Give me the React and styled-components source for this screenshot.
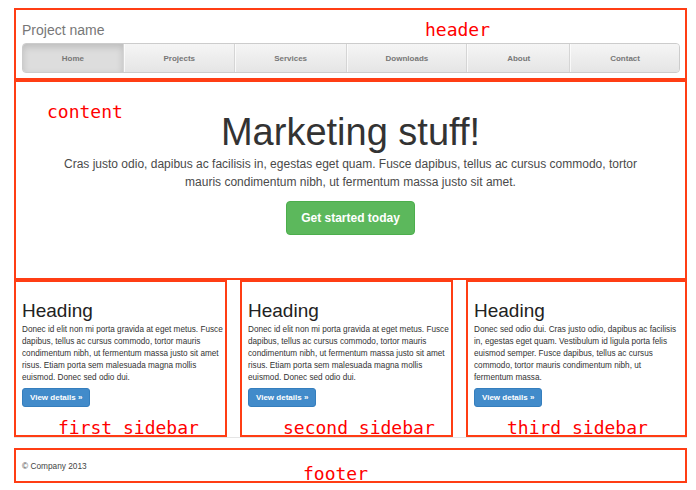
import React from 'react';
import styled, { createGlobalStyle } from 'styled-components';

const GlobalStyle = createGlobalStyle`
  html, body { margin: 0; padding: 0; background: #fff; }
  body {
    font-family: "Liberation Sans", Arial, Helvetica, sans-serif;
    color: #333;
  }
  * { box-sizing: border-box; }
`;

const Page = styled.div`
  width: 673px;
  margin-left: 14px;
  padding-top: 8px;
`;

const Region = styled.div`
  position: relative;
  border: 2px solid #ff3d14;
`;

const Label = styled.span`
  position: absolute;
  left: ${(p) => p.$x}px;
  top: ${(p) => p.$y}px;
  font-family: "DejaVu Sans Mono", "Liberation Mono", monospace;
  font-size: 18px;
  line-height: 18px;
  color: #ff0000;
  white-space: nowrap;
  pointer-events: none;
`;

/* ---------- header ---------- */
const Header = styled(Region)`
  padding: 10px 5px 5px 6px;
`;

const Brand = styled.div`
  font-size: 14px;
  line-height: 20px;
  color: #777;
`;

const Nav = styled.nav`
  margin-top: 3px;
  height: 30px;
  display: grid;
  grid-template-columns: 101fr 111fr 112fr 121fr 103fr 109fr;
  border: 1px solid #ccc;
  border-radius: 4px;
  overflow: hidden;
  background: #eee;
`;

const NavItem = styled.a`
  display: flex;
  align-items: center;
  justify-content: center;
  font-size: 8px;
  font-weight: bold;
  color: #777;
  text-decoration: none;
  border-left: 1px solid rgba(255, 255, 255, 0.7);
  border-right: 1px solid #d5d5d5;
  background: ${(p) =>
    p.$active ? '#ddd' : 'linear-gradient(to bottom, #f5f5f5 0%, #e5e5e5 100%)'};
  box-shadow: ${(p) => (p.$active ? 'inset 0 3px 7px rgba(0,0,0,0.15)' : 'none')};
  &:first-child { border-left: 0; }
  &:last-child { border-right: 0; }
`;

/* ---------- content ---------- */
const Content = styled(Region)`
  padding: 29px 0 43px;
  text-align: center;
`;

const HeroTitle = styled.h1`
  margin: 0;
  font-size: 38px;
  line-height: 42px;
  font-weight: 400;
  color: #333;
`;

const Lead = styled.p`
  margin: 2px auto 0;
  max-width: 590px;
  font-size: 12px;
  line-height: 18px;
  color: #4a4a4a;
`;

const CTA = styled.a`
  margin-top: 10px;
  display: inline-flex;
  align-items: center;
  height: 34px;
  padding: 0 14px;
  background: #5cb85c;
  border: 1px solid #4cae4c;
  border-radius: 4px;
  color: #fff;
  font-size: 12px;
  font-weight: bold;
  text-decoration: none;
`;

/* ---------- sidebars ---------- */
const Columns = styled.div`
  display: grid;
  grid-template-columns: 213px 213px 1fr;
  column-gap: 13px;
`;

const Sidebar = styled(Region)`
  padding: 18px ${(p) => p.$padRight}px 28px 6px;
`;

const Heading = styled.h2`
  margin: 0;
  font-size: 19px;
  line-height: 22px;
  font-weight: 400;
  color: #222;
`;

const Body = styled.p`
  margin: 2px 0 0;
  font-size: 8.2px;
  line-height: 12px;
  color: #333;
`;

const DetailsButton = styled.a`
  margin-top: 4px;
  display: inline-flex;
  align-items: center;
  height: 19px;
  padding: 0 7px;
  background: #428bca;
  border: 1px solid #357ebd;
  border-radius: 3px;
  color: #fff;
  font-size: 8px;
  font-weight: bold;
  text-decoration: none;
`;

/* ---------- footer ---------- */
const FooterWrap = styled.footer`
  border-top: 1px solid #e5e5e5;
  padding-top: 10px;
`;

const Footer = styled(Region)`
  height: 35px;
  padding-left: 6px;
  display: flex;
  align-items: center;
  font-size: 8.3px;
  color: #444;
`;

const navItems = ['Home', 'Projects', 'Services', 'Downloads', 'About', 'Contact'];

const sidebars = [
  {
    label: 'first sidebar',
    labelX: 42,
    padRight: 0,
    text:
      'Donec id elit non mi porta gravida at eget metus. Fusce dapibus, tellus ac cursus commodo, tortor mauris condimentum nibh, ut fermentum massa justo sit amet risus. Etiam porta sem malesuada magna mollis euismod. Donec sed odio dui.',
  },
  {
    label: 'second sidebar',
    labelX: 41,
    padRight: 0,
    text:
      'Donec id elit non mi porta gravida at eget metus. Fusce dapibus, tellus ac cursus commodo, tortor mauris condimentum nibh, ut fermentum massa justo sit amet risus. Etiam porta sem malesuada magna mollis euismod. Donec sed odio dui.',
  },
  {
    label: 'third sidebar',
    labelX: 39,
    padRight: 6,
    text:
      'Donec sed odio dui. Cras justo odio, dapibus ac facilisis in, egestas eget quam. Vestibulum id ligula porta felis euismod semper. Fusce dapibus, tellus ac cursus commodo, tortor mauris condimentum nibh, ut fermentum massa.',
  },
];

export default function App() {
  return (
    <>
      <GlobalStyle />
      <Page>
        <Header>
          <Label $x={409} $y={11}>header</Label>
          <Brand>Project name</Brand>
          <Nav>
            {navItems.map((item, i) => (
              <NavItem key={item} href="#" $active={i === 0}>
                {item}
              </NavItem>
            ))}
          </Nav>
        </Header>

        <Content>
          <Label $x={31} $y={21}>content</Label>
          <HeroTitle>Marketing stuff!</HeroTitle>
          <Lead>
            Cras justo odio, dapibus ac facilisis in, egestas eget quam. Fusce dapibus,
            tellus ac cursus commodo, tortor mauris condimentum nibh, ut fermentum massa
            justo sit amet.
          </Lead>
          <CTA href="#">Get started today</CTA>
        </Content>

        <Columns>
          {sidebars.map((s) => (
            <Sidebar key={s.label} $padRight={s.padRight}>
              <Label $x={s.labelX} $y={137}>{s.label}</Label>
              <Heading>Heading</Heading>
              <Body>{s.text}</Body>
              <DetailsButton href="#">View details »</DetailsButton>
            </Sidebar>
          ))}
        </Columns>

        <FooterWrap>
          <Footer>
            <Label $x={287} $y={15}>footer</Label>
            © Company 2013
          </Footer>
        </FooterWrap>
      </Page>
    </>
  );
}
